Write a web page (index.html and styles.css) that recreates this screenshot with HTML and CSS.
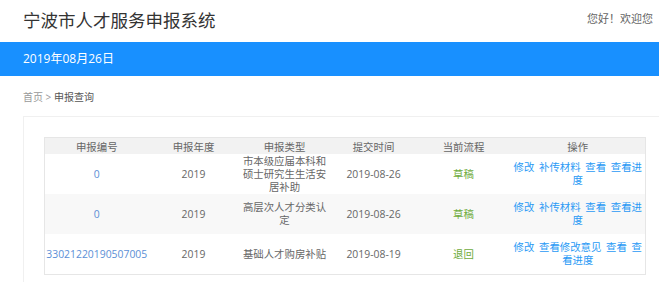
FILE: index.html
```html
<!DOCTYPE html>
<html>

<head>
	<meta charset="utf-8" />
	<title>宁波市人才服务申报系统</title>
	<link rel="stylesheet" href="styles.css">
</head>

<body>
	<div class="header">
		<h1 class="logo">宁波市人才服务申报系统</h1>
		<span class="welcome">您好！欢迎您</span>
	</div>
	<div class="datebar">2019年08月26日</div>
	<div class="crumb">
		<a class="crumb-home" href="#">首页</a> &gt; <span class="crumb-cur">申报查询</span>
	</div>
	<div class="panel">
		<table class="list">
			<colgroup>
				<col class="c-no" />
				<col class="c-year" />
				<col class="c-type" />
				<col class="c-time" />
				<col class="c-flow" />
				<col class="c-op" />
			</colgroup>
			<thead>
				<tr>
					<th>申报编号</th>
					<th>申报年度</th>
					<th>申报类型</th>
					<th>提交时间</th>
					<th>当前流程</th>
					<th>操作</th>
				</tr>
			</thead>
			<tbody>
				<tr>
					<td class="no"><a href="#">0</a></td>
					<td>2019</td>
					<td>市本级应届本科和硕士研究生生活安居补助</td>
					<td>2019-08-26</td>
					<td class="flow">草稿</td>
					<td class="ops"><a href="#">修改</a> <a href="#">补传材料</a> <a href="#">查看</a> <a href="#">查看进度</a></td>
				</tr>
				<tr>
					<td class="no"><a href="#">0</a></td>
					<td>2019</td>
					<td>高层次人才分类认定</td>
					<td>2019-08-26</td>
					<td class="flow">草稿</td>
					<td class="ops"><a href="#">修改</a> <a href="#">补传材料</a> <a href="#">查看</a> <a href="#">查看进度</a></td>
				</tr>
				<tr>
					<td class="no"><a href="#">33021220190507005</a></td>
					<td>2019</td>
					<td>基础人才购房补贴</td>
					<td>2019-08-19</td>
					<td class="flow">退回</td>
					<td class="ops"><a href="#">修改</a> <a href="#">查看修改意见</a> <a href="#">查看</a> <a href="#">查看进度</a></td>
				</tr>
			</tbody>
		</table>
	</div>
</body>

</html>
```

FILE: styles.css
```css
body {
	margin: 0;
	background-color: #fff;
	font: normal 10.4px "Open Sans", "Noto Sans CJK SC", sans-serif;
	color: #666;
}

a {
	text-decoration: none;
}

.header {
	display: flex;
	justify-content: space-between;
	align-items: center;
	height: 38px;
	padding: 0 6px 4px 23px;
}

.logo {
	margin: 0;
	font-size: 17.5px;
	font-weight: normal;
	color: #333;
}

.welcome {
	font-size: 11px;
	color: #666;
	padding-bottom: 3px;
}

.datebar {
	height: 34px;
	line-height: 34px;
	padding-left: 23px;
	background-color: #1890ff;
	color: #fff;
	font-size: 12px;
}

.crumb {
	padding: 15px 23px 0;
	line-height: 12px;
	margin-bottom: 13px;
	font-size: 10px;
	color: #999;
}

.crumb-home {
	color: #999;
}

.crumb-cur {
	color: #555;
}

.panel {
	margin-left: 23px;
	border: 1px solid #f0f0f0;
	border-right: none;
	padding: 20px 0 20px 20px;
}

.list {
	width: 601px;
	table-layout: fixed;
	border-collapse: collapse;
	border: 1px solid #e6e6e6;
	text-align: center;
}

.c-no { width: 104px; }
.c-year { width: 90px; }
.c-type { width: 92px; }
.c-time { width: 86px; }
.c-flow { width: 94px; }
.c-op { width: 135px; }

.list th {
	height: 16px;
	padding: 0;
	font-weight: normal;
	color: #666;
	background-color: #f2f2f2;
}

.list td {
	height: 40px;
	padding: 0 2px;
	line-height: 13px;
}

.list tbody tr:nth-child(2) {
	background-color: #f8f8f8;
}

.list td.no {
	padding: 0;
}

.no a {
	color: #5b8fd6;
}

.flow {
	color: #6eab3c;
}

.ops {
	word-spacing: 2px;
}

.ops a {
	color: #2a9af5;
}
```
